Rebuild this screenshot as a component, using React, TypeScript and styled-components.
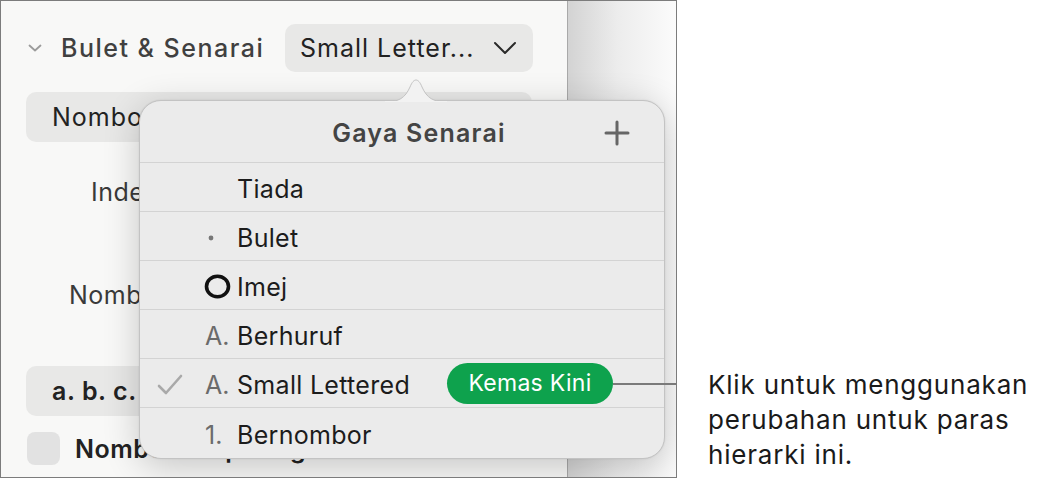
import React from "react";
import styled, { createGlobalStyle } from "styled-components";

const GlobalStyle = createGlobalStyle`
  body {
    margin: 0;
    background: #ffffff;
    font-family: Inter, "Noto Sans", sans-serif;
  }
`;

const Page = styled.div`
  display: flex;
  width: 1043px;
  height: 479px;
  overflow: hidden;
`;

const Frame = styled.div`
  position: relative;
  display: flex;
  width: 677px;
  height: 478px;
  box-sizing: border-box;
  border: 1px solid #7c7c7c;
  overflow: hidden;
`;

const Sidebar = styled.div`
  width: 566px;
  background: #f8f8f7;
  padding: 23px 34px 0 25px;
  box-sizing: border-box;
  display: flex;
  flex-direction: column;
`;

const Strip = styled.div`
  flex: 1;
  border-left: 1px solid #a9a9a9;
  background: linear-gradient(to right, #d3d3d3, #ececec 45%, #fbfbfb);
`;

const HeadRow = styled.div`
  display: flex;
  align-items: center;
  height: 48px;
`;

const Disclosure = styled.svg`
  width: 14px;
  height: 10px;
  margin: 0 19px 0 2px;
`;

const SectionTitle = styled.div`
  font-size: 25px;
  font-weight: 500;
  letter-spacing: 1.5px;
  color: #404040;
  flex: 1;
`;

const PopButton = styled.div<{ $wide?: boolean; $bold?: boolean }>`
  display: flex;
  align-items: center;
  justify-content: space-between;
  box-sizing: border-box;
  height: ${(p) => (p.$wide ? 50 : 48)}px;
  width: ${(p) => (p.$wide ? "506px" : "248px")};
  padding: 0 16px 0 ${(p) => (p.$wide ? 26 : 15)}px;
  border-radius: 10px;
  background: #e8e8e7;
  font-size: 25px;
  font-weight: ${(p) => (p.$bold ? 600 : 400)};
  letter-spacing: ${(p) => (p.$bold ? 0.6 : 1)}px;
  color: #222;
`;

const Chevron = styled.svg`
  width: 24px;
  height: 14px;
`;

const FieldRow = styled.div<{ $top: number; $indent: number }>`
  margin-top: ${(p) => p.$top}px;
  padding-left: ${(p) => p.$indent}px;
  font-size: 25px;
  letter-spacing: 0.5px;
  color: #3a3a3a;
  height: 30px;
  line-height: 30px;
`;

const CheckRow = styled.div`
  display: flex;
  align-items: center;
  gap: 15px;
  margin-top: 16px;
  margin-left: 1px;
`;

const Box = styled.div`
  width: 33px;
  height: 33px;
  border-radius: 8px;
  background: #e2e2e2;
`;

const CheckLabel = styled.div`
  font-size: 25px;
  font-weight: 600;
  letter-spacing: 0.5px;
  color: #222;
`;

const Popover = styled.div`
  position: absolute;
  left: 138px;
  top: 99px;
  width: 526px;
  height: 359px;
  box-sizing: border-box;
  background: #ebebeb;
  border: 1px solid #c3c3c3;
  border-radius: 22px;
  box-shadow: 0 8px 36px rgba(0, 0, 0, 0.2), 0 0 2px rgba(0, 0, 0, 0.1);
  display: flex;
  flex-direction: column;
`;

const Arrow = styled.svg`
  position: absolute;
  left: 245px;
  top: -22px;
  width: 62px;
  height: 23px;
`;

const PopHeader = styled.div`
  position: relative;
  height: 61px;
  display: flex;
  align-items: center;
  justify-content: center;
  font-size: 25px;
  font-weight: 600;
  letter-spacing: 1.2px;
  color: #444;
  padding: 2px 0 0 34px;
  box-sizing: border-box;
`;

const Plus = styled.svg`
  position: absolute;
  right: 34px;
  top: 19px;
  width: 26px;
  height: 26px;
`;

const Row = styled.div<{ $last?: boolean }>`
  display: flex;
  align-items: center;
  height: ${(p) => (p.$last ? "auto" : "49px")};
  flex: ${(p) => (p.$last ? 1 : "none")};
  border-top: 1px solid #d3d3d3;
  padding-left: 17px;
  padding-top: 3px;
  box-sizing: border-box;
  font-size: 25px;
  letter-spacing: 0.3px;
`;

const CheckCell = styled.div`
  width: 36px;
  display: flex;
  align-items: center;
`;

const Marker = styled.div`
  width: 44px;
  padding-left: 12px;
  box-sizing: border-box;
  color: #6b6b6b;
  display: flex;
  align-items: center;
`;

const MarkerText = styled.span`
  letter-spacing: 0;
`;

const Label = styled.div`
  color: #1c1c1c;
  width: 210px;
`;

const Update = styled.div`
  position: relative;
  height: 41px;
  width: 166px;
  border-radius: 21px;
  background: #0ea24d;
  color: #fff;
  font-size: 23px;
  font-weight: 400;
  display: flex;
  align-items: center;
  justify-content: center;
  margin-top: -3px;
  &::after {
    content: "";
    position: absolute;
    left: 166px;
    top: 20px;
    width: 88px;
    height: 2px;
    background: #7a7a7a;
  }
`;

const Callout = styled.div`
  margin-left: 31px;
  padding-top: 367px;
  font-size: 26px;
  line-height: 35px;
  color: #1a1a1a;
  letter-spacing: 0.8px;
  white-space: nowrap;
`;

const items = [
  { marker: "", label: "Tiada" },
  { marker: "dot", label: "Bulet" },
  { marker: "ring", label: "Imej" },
  { marker: "A.", label: "Berhuruf" },
  { marker: "A.", label: "Small Lettered", checked: true, update: true },
  { marker: "1.", label: "Bernombor" },
];

function MarkerGlyph({ kind }: { kind: string }) {
  if (kind === "dot")
    return (
      <svg width="12" height="12" viewBox="0 0 12 12">
        <circle cx="6" cy="6" r="2.4" fill="#777" />
      </svg>
    );
  if (kind === "ring")
    return (
      <svg width="27" height="25" viewBox="0 0 27 25" style={{ marginLeft: -1 }}>
        <ellipse cx="13.5" cy="12.5" rx="11" ry="10.2" fill="none" stroke="#111" strokeWidth="3.6" />
      </svg>
    );
  return <MarkerText>{kind}</MarkerText>;
}

export default function App() {
  return (
    <Page>
      <GlobalStyle />
      <Frame>
        <Sidebar>
          <HeadRow>
            <Disclosure viewBox="0 0 14 10">
              <polyline points="1.5,2.5 7,7.5 12.5,2.5" fill="none" stroke="#9b9b9b" strokeWidth="1.8" strokeLinecap="round" strokeLinejoin="round" />
            </Disclosure>
            <SectionTitle>Bulet &amp; Senarai</SectionTitle>
            <PopButton>
              Small Letter...
              <Chevron viewBox="0 0 24 14">
                <polyline points="2,2 12,12 22,2" fill="none" stroke="#2a2a2a" strokeWidth="2" strokeLinecap="round" strokeLinejoin="round" />
              </Chevron>
            </PopButton>
          </HeadRow>
          <div style={{ height: 20 }} />
          <PopButton $wide>Nombor</PopButton>
          <FieldRow $top={35} $indent={65}>Inden Teks:</FieldRow>
          <FieldRow $top={73} $indent={43}>Nombor:</FieldRow>
          <div style={{ height: 56 }} />
          <PopButton $wide $bold>a. b. c.</PopButton>
          <CheckRow>
            <Box />
            <CheckLabel>Nombor Berperingkat</CheckLabel>
          </CheckRow>
        </Sidebar>
        <Strip />
        <Popover>
          <Arrow viewBox="0 0 62 23">
            <path d="M0,23 C14,23 20,19 25,8 C27,3 29,1 31,1 C33,1 35,3 37,8 C42,19 48,23 62,23 Z" fill="#f2f2f2" stroke="#c3c3c3" strokeWidth="1" />
            <rect x="0" y="22" width="62" height="2" fill="#f2f2f2" />
          </Arrow>
          <PopHeader>
            Gaya Senarai
            <Plus viewBox="0 0 26 26">
              <path d="M13 2 V24 M2 13 H24" stroke="#666" strokeWidth="3" strokeLinecap="round" />
            </Plus>
          </PopHeader>
          {items.map((it, i) => (
            <Row key={it.label} $last={i === items.length - 1}>
              <CheckCell>
                {it.checked && (
                  <svg width="26" height="22" viewBox="0 0 26 22">
                    <polyline points="2,12 9,19 24,2" fill="none" stroke="#a9a9a9" strokeWidth="2.6" strokeLinecap="round" strokeLinejoin="round" />
                  </svg>
                )}
              </CheckCell>
              <Marker>{it.marker && <MarkerGlyph kind={it.marker} />}</Marker>
              <Label>{it.label}</Label>
              {it.update && <Update>Kemas Kini</Update>}
            </Row>
          ))}
        </Popover>
      </Frame>
      <Callout>
        Klik untuk menggunakan
        <br />
        perubahan untuk paras
        <br />
        hierarki ini.
      </Callout>
    </Page>
  );
}
